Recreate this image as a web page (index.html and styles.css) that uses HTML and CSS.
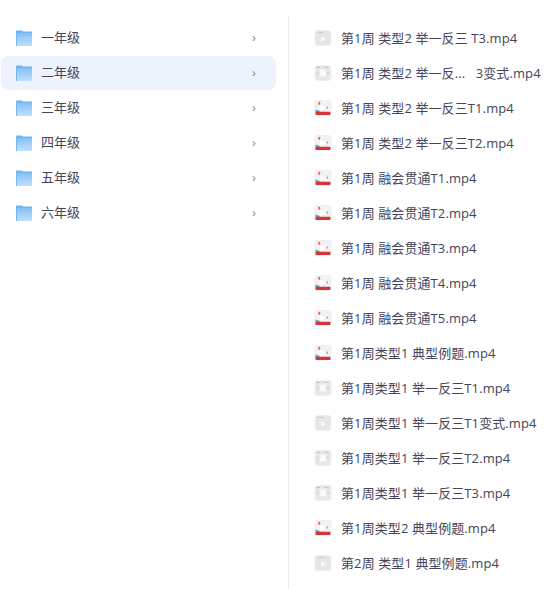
FILE: index.html
```html
<!DOCTYPE html>
<html lang="zh-CN">
<head>
    <meta charset="UTF-8">
    <meta name="viewport" content="width=device-width, initial-scale=1.0">
    <title>文件列表</title>
    <link rel="stylesheet" href="styles.css">
</head>
<body>
  <svg class="defs" width="0" height="0">
    <defs>
      <linearGradient id="folderBody" x1="0" y1="0" x2="0" y2="1">
        <stop offset="0" stop-color="#82c0f6"/>
        <stop offset="1" stop-color="#c2e0fc"/>
      </linearGradient>
      <symbol id="folder" viewBox="0 0 16 16">
        <path d="M0 0.5h6l1 1h9v3H0z" fill="#6fb5f0"/>
        <rect x="0" y="3" width="16" height="13" fill="url(#folderBody)"/>
        <rect x="0" y="1" width="1" height="15" fill="#74b8f1"/>
        <rect x="12" y="6" width="2" height="2" fill="#a3cdf5"/>
      </symbol>
      <symbol id="thumb-grey" viewBox="0 0 18 17">
        <rect x="0.5" y="0.5" width="17" height="16" rx="2.5" fill="#e6e6e6" stroke="#f0f0f0"/>
        <rect x="3" y="2" width="7" height="1" fill="#c4cacd"/>
        <path d="M7 6.5l5 3-5 3z" fill="#fafafa"/>
      </symbol>
      <symbol id="thumb-busy" viewBox="0 0 18 17">
        <rect x="0.5" y="0.5" width="17" height="16" rx="2.5" fill="#e8e8e8" stroke="#f0f0f0"/>
        <rect x="2" y="2" width="4" height="1" fill="#b4bdc2"/>
        <rect x="10" y="2" width="5" height="1" fill="#b4cace"/>
        <rect x="6" y="5" width="6" height="7" fill="#fbfbfb"/>
        <rect x="2" y="8" width="2" height="1" fill="#cfc2b4"/>
        <rect x="13" y="8" width="3" height="1" fill="#b4cbdc"/>
      </symbol>
      <symbol id="thumb-red" viewBox="0 0 18 17">
        <rect x="0.5" y="0.5" width="17" height="16" rx="2.5" fill="#f4f1f1" stroke="#eee"/>
        <rect x="4" y="2" width="2" height="3" fill="#e06a6a"/>
        <path d="M6 5l6 3.5-6 3.5z" fill="#fff"/>
        <path d="M1 10l4 1.5 1 1.5H1z" fill="#5aa3c8"/>
        <rect x="13" y="7" width="1" height="2" fill="#777"/>
        <rect x="1" y="12.5" width="16" height="3.5" rx="1" fill="#d43537"/>
      </symbol>
    </defs>
  </svg>

  <div class="page">
    <!-- grades -->
    <ul class="grades">
      <li class="grade"><svg class="folder"><use href="#folder"/></svg><span>一年级</span><i class="arrow">›</i></li>
      <li class="grade active"><svg class="folder"><use href="#folder"/></svg><span>二年级</span><i class="arrow">›</i></li>
      <li class="grade"><svg class="folder"><use href="#folder"/></svg><span>三年级</span><i class="arrow">›</i></li>
      <li class="grade"><svg class="folder"><use href="#folder"/></svg><span>四年级</span><i class="arrow">›</i></li>
      <li class="grade"><svg class="folder"><use href="#folder"/></svg><span>五年级</span><i class="arrow">›</i></li>
      <li class="grade"><svg class="folder"><use href="#folder"/></svg><span>六年级</span><i class="arrow">›</i></li>
    </ul>

    <!-- files -->
    <ul class="files">
      <li class="file"><svg class="thumb"><use href="#thumb-grey"/></svg><span>第1周 类型2 举一反三 T3.mp4</span></li>
      <li class="file"><svg class="thumb"><use href="#thumb-busy"/></svg><span>第1周 类型2 举一反...&nbsp;&nbsp;&nbsp;3变式.mp4</span></li>
      <li class="file"><svg class="thumb"><use href="#thumb-red"/></svg><span>第1周 类型2 举一反三T1.mp4</span></li>
      <li class="file"><svg class="thumb"><use href="#thumb-red"/></svg><span>第1周 类型2 举一反三T2.mp4</span></li>
      <li class="file"><svg class="thumb"><use href="#thumb-red"/></svg><span>第1周 融会贯通T1.mp4</span></li>
      <li class="file"><svg class="thumb"><use href="#thumb-red"/></svg><span>第1周 融会贯通T2.mp4</span></li>
      <li class="file"><svg class="thumb"><use href="#thumb-red"/></svg><span>第1周 融会贯通T3.mp4</span></li>
      <li class="file"><svg class="thumb"><use href="#thumb-red"/></svg><span>第1周 融会贯通T4.mp4</span></li>
      <li class="file"><svg class="thumb"><use href="#thumb-red"/></svg><span>第1周 融会贯通T5.mp4</span></li>
      <li class="file"><svg class="thumb"><use href="#thumb-red"/></svg><span>第1周类型1 典型例题.mp4</span></li>
      <li class="file"><svg class="thumb"><use href="#thumb-busy"/></svg><span>第1周类型1 举一反三T1.mp4</span></li>
      <li class="file"><svg class="thumb"><use href="#thumb-grey"/></svg><span>第1周类型1 举一反三T1变式.mp4</span></li>
      <li class="file"><svg class="thumb"><use href="#thumb-busy"/></svg><span>第1周类型1 举一反三T2.mp4</span></li>
      <li class="file"><svg class="thumb"><use href="#thumb-busy"/></svg><span>第1周类型1 举一反三T3.mp4</span></li>
      <li class="file"><svg class="thumb"><use href="#thumb-red"/></svg><span>第1周类型2 典型例题.mp4</span></li>
      <li class="file"><svg class="thumb"><use href="#thumb-grey"/></svg><span>第2周 类型1 典型例题.mp4</span></li>
    </ul>
  </div>
</body>
</html>
```
FILE: styles.css
```css
body {
  margin: 0;
  background: #fff;
  font-family: "Open Sans", "Noto Sans CJK SC", sans-serif;
  font-size: 13px;
  color: #45455a;
  overflow: hidden;
}

ul {
  list-style: none;
  margin: 0;
  padding: 0;
}

.defs {
  display: block;
  height: 0;
}

.page {
  display: flex;
  height: 589px;
  padding-top: 15px;
  box-sizing: border-box;
}

.grades {
  width: 275px;
  margin-left: 1px;
  padding: 6px 0 0;
}

.grade {
  display: flex;
  align-items: center;
  height: 34px;
  margin-bottom: 1px;
  padding: 0 20px 0 15px;
  border-radius: 8px;
}

.grade span {
  flex: 1;
  line-height: 33px;
  height: 34px;
}

.grade.active {
  background: #eef2fd;
}

.folder {
  width: 16px;
  height: 16px;
  margin-right: 9px;
  flex: none;
}

.arrow {
  font-style: normal;
  font-size: 13px;
  line-height: 33px;
  height: 34px;
  color: #8a8a98;
}

.files {
  margin-left: 12px;
  padding: 6px 0 0 25px;
  border-left: 1px solid #ececec;
  flex: 1;
}

.file {
  display: flex;
  align-items: center;
  height: 35px;
  white-space: nowrap;
}

.file span {
  line-height: 35px;
  height: 35px;
  letter-spacing: 0.1px;
}

.thumb {
  width: 18px;
  height: 16px;
  margin-top: -1px;
  margin-right: 9px;
  flex: none;
}
```
